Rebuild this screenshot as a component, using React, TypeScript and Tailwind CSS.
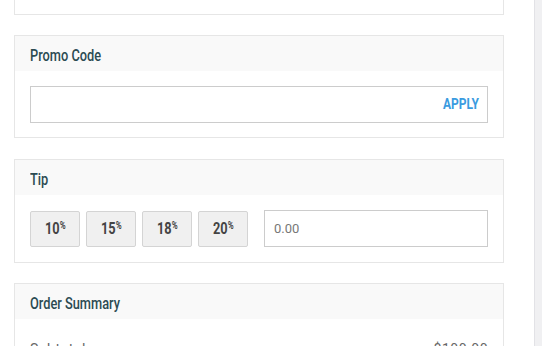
import React from 'react';

// no condensed face installed, so squeeze Roboto a bit
const cond = "inline-block origin-left scale-x-[0.8] font-['Roboto',sans-serif]";

const Card: React.FC<{ title: string; children: React.ReactNode }> = ({ title, children }) => (
  <div className="border border-[#e6e6e6] bg-white">
    <div className="h-[35px] bg-[#f9f9f9] px-[15px] pt-[7px]">
      <span className={`${cond} whitespace-nowrap text-[16px] font-medium text-[#2b4b52]`}>{title}</span>
    </div>
    {children}
  </div>
);

const tips = ['10', '15', '18', '20'];

export default function App() {
  return (
    <div className="flex h-[346px] overflow-hidden bg-white">
      <div className="w-[534px] pl-[14px] pr-[30px]">
        <div className="h-[15px] border border-t-0 border-[#e6e6e6]" />
        <div className="mt-[20px]">
          <Card title="Promo Code">
            <div className="px-[15px] pt-[15px] pb-[14px]">
              <div className="flex h-[37px] items-center justify-end border border-[#cccccc] pr-[8px]">
                <span className={`${cond} origin-right text-[15px] font-bold text-[#3a9be0]`}>APPLY</span>
              </div>
            </div>
          </Card>
        </div>
        <div className="mt-[21px]">
          <Card title="Tip">
            <div className="flex items-center px-[15px] pt-[15px] pb-[15px]">
              <div className="flex gap-[6px]">
                {tips.map((t) => (
                  <div
                    key={t}
                    className="flex h-[36px] w-[50px] items-center justify-center rounded-[2px] border border-[#d4d4d4] bg-[#f0f0f0] pl-[6px]"
                  >
                    <span className={`${cond} origin-center text-[16px] font-bold text-[#444]`}>
                      {t}
                      <span className="relative -top-[5px] text-[10px]">%</span>
                    </span>
                  </div>
                ))}
              </div>
              <div className="ml-[16px] flex h-[37px] flex-1 items-center border border-[#cccccc] px-[9px] font-['Roboto',sans-serif] text-[13px] text-[#777]">
                0.00
              </div>
            </div>
          </Card>
        </div>
        <div className="mt-[20px]">
          <Card title="Order Summary">
            <div className="flex justify-between px-[15px] pt-[20px] font-['Roboto',sans-serif] text-[14px] tracking-[0.5px] text-[#666]">
              <span>Subtotal</span>
              <span>$100.00</span>
            </div>
          </Card>
        </div>
      </div>
      <div className="w-[8px] border-l border-[#e2e2e6] bg-[#f0f0f2]" />
    </div>
  );
}
